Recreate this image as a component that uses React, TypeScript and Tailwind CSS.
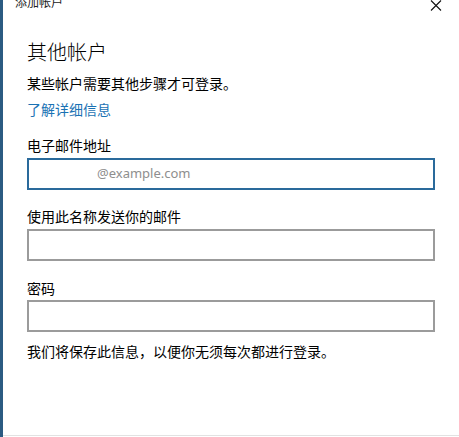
import React from 'react';

const font = { fontFamily: '"Noto Sans CJK SC", "Noto Sans", sans-serif' };

export default function App() {
  return (
    <div className="w-[459px] h-[437px] overflow-hidden bg-white flex text-black" style={font}>
      {/* left accent strip */}
      <div className="w-[3px] h-full bg-[#2b5b82]" />

      <div className="flex-1 relative flex flex-col border-b border-[#e2e2e2] h-[436px]">
        {/* title bar */}
        <div className="-mt-[6px] pl-[12px] h-[16px] text-[12px] leading-[16px] text-[#222]">添加帐户</div>
        <button className="absolute right-[17px] top-0 w-[12px] h-[11px] flex items-center justify-center">
          <svg width="12" height="11" viewBox="0 0 12 11" fill="none" stroke="#111" strokeWidth="1.1">
            <path d="M1 0.5 L11 10.5 M11 0.5 L1 10.5" />
          </svg>
        </button>

        <div className="pl-[24px] flex flex-col">
          <h1 className="mt-[28px] text-[20px] leading-[28px] font-light">其他帐户</h1>
          <p className="mt-[7px] text-[14px] leading-[20px]">某些帐户需要其他步骤才可登录。</p>
          <a className="mt-[6px] text-[14px] leading-[20px] text-[#1a72b4]">了解详细信息</a>

          <label className="mt-[16px] text-[14px] leading-[20px]">电子邮件地址</label>
          <div className="mt-[3px] w-[408px] h-[32px] border-2 border-[#2a6a9b] flex items-center">
            <span className="pl-[68px] text-[13px] text-[#8e8e8e]" style={{ fontFamily: '"Noto Sans", sans-serif' }}>@example.com</span>
          </div>

          <label className="mt-[16px] text-[14px] leading-[20px]">使用此名称发送你的邮件</label>
          <div className="mt-[3px] w-[408px] h-[32px] border-2 border-[#9b9b9b]" />

          <label className="mt-[17px] text-[14px] leading-[20px]">密码</label>
          <div className="mt-[2px] w-[408px] h-[32px] border-2 border-[#9b9b9b]" />

          <p className="mt-[9px] text-[14px] leading-[20px]">我们将保存此信息，以便你无须每次都进行登录。</p>
        </div>
      </div>
    </div>
  );
}
